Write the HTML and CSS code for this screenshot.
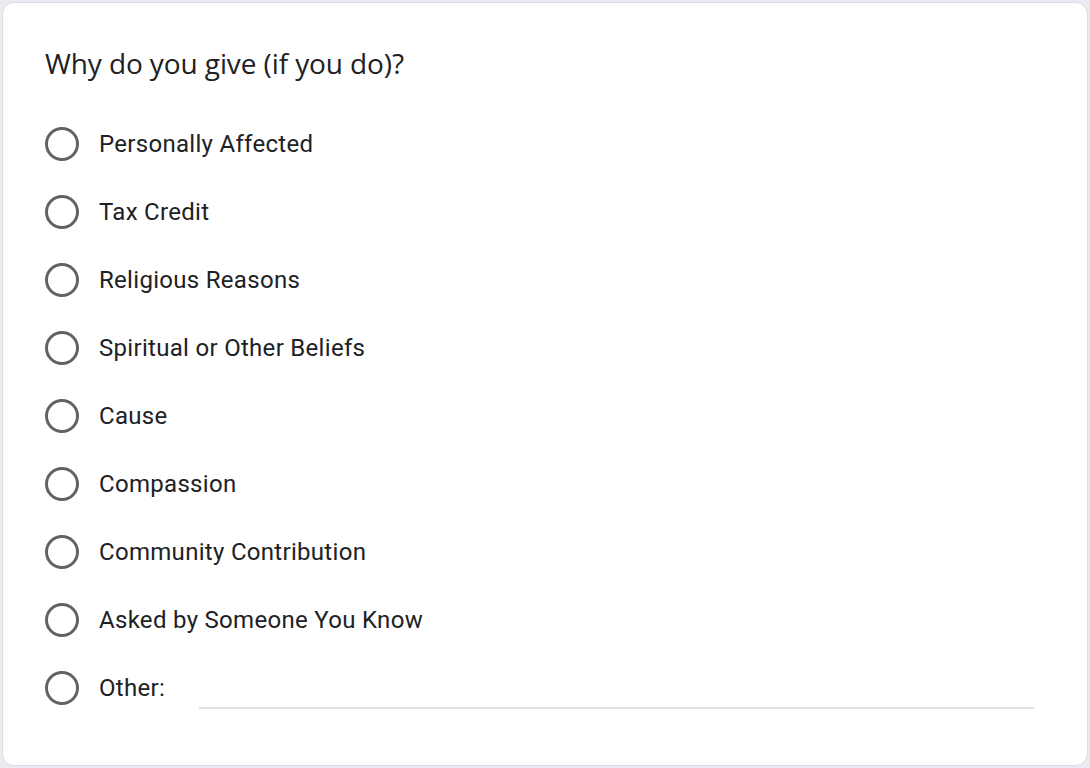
FILE: index.html
```html
<!DOCTYPE html>
<html>
<head>
<meta charset="utf-8">
<link rel="stylesheet" href="styles.css">
</head>
<body>
<div class="card">
  <div class="title">Why do you give (if you do)?</div>
  <div class="options">
    <label class="opt"><span class="radio"></span><span class="lbl">Personally Affected</span></label>
    <label class="opt"><span class="radio"></span><span class="lbl">Tax Credit</span></label>
    <label class="opt"><span class="radio"></span><span class="lbl">Religious Reasons</span></label>
    <label class="opt"><span class="radio"></span><span class="lbl">Spiritual or Other Beliefs</span></label>
    <label class="opt"><span class="radio"></span><span class="lbl">Cause</span></label>
    <label class="opt"><span class="radio"></span><span class="lbl">Compassion</span></label>
    <label class="opt"><span class="radio"></span><span class="lbl">Community Contribution</span></label>
    <label class="opt"><span class="radio"></span><span class="lbl">Asked by Someone You Know</span></label>
    <label class="opt other"><span class="radio"></span><span class="lbl">Other:</span><span class="line"></span></label>
  </div>
</div>
</body>
</html>
```

FILE: styles.css
```css
html, body {
  margin: 0;
  padding: 0;
}
body {
  background: #eceaf2;
  width: 1090px;
  height: 768px;
  padding: 2px;
  box-sizing: border-box;
  font-family: Roboto, "Liberation Sans", sans-serif;
}
.card {
  height: 764px;
  box-sizing: border-box;
  background: #fff;
  border: 1px solid #dadce0;
  border-radius: 12px;
  padding: 42px 0 0 42px;
}
.title {
  font-family: "Open Sans", Roboto, sans-serif;
  font-size: 28px;
  line-height: 36px;
  color: #202124;
  letter-spacing: -0.1px;
}
.options {
  display: flex;
  flex-direction: column;
  margin-top: 29px;
}
.opt {
  display: flex;
  align-items: center;
  height: 68px;
}
.radio {
  width: 28px;
  height: 28px;
  border: 3px solid #5f6368;
  border-radius: 50%;
  flex: none;
}
.lbl {
  margin-left: 20px;
  font-size: 24px;
  letter-spacing: 0.3px;
  color: #202124;
}
.line {
  flex: none;
  width: 835px;
  height: 2px;
  background: #e0e0e0;
  margin-left: 34px;
  align-self: flex-end;
  margin-bottom: 13px;
}
```
